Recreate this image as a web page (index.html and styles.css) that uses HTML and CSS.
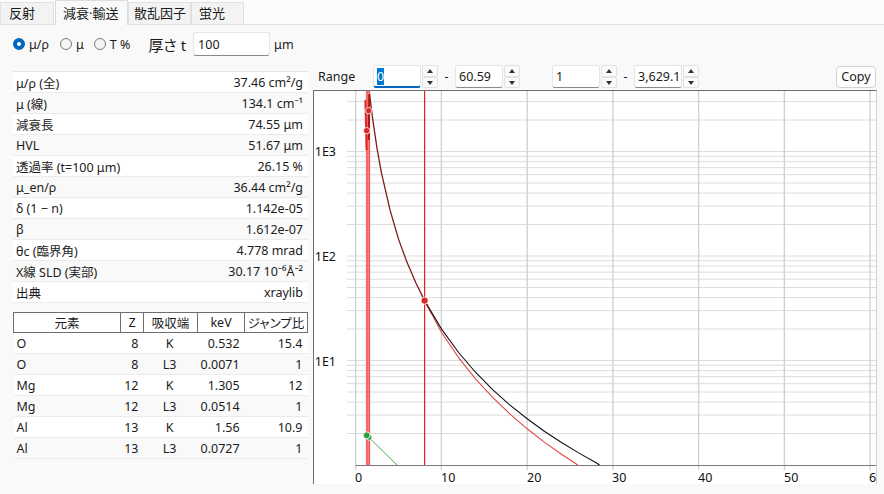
FILE: index.html
```html
<!DOCTYPE html>
<html lang="ja">
<head>
    <meta charset="UTF-8">
    <title>減衰・輸送</title>
    <link rel="stylesheet" href="styles.css">
</head>
<body>

    <!-- タブ -->
    <div class="tabs">
        <div class="tab t1">反射</div>
        <div class="tab t2 active">減衰·輸送</div>
        <div class="tab t3">散乱因子</div>
        <div class="tab t4">蛍光</div>
    </div>

    <div class="panel">
        <!-- 表示モードと厚さ -->
        <div class="options">
            <div class="radio r1"><span class="dot on"></span>μ/ρ</div>
            <div class="radio r2"><span class="dot"></span>μ</div>
            <div class="radio r3"><span class="dot"></span>T %</div>
            <div class="thick">厚さ t</div>
            <div class="field thick-input">100</div>
            <div class="unit">μm</div>
        </div>

        <div class="main">
            <div class="left">
                <table class="props">
                    <tr><td>μ/ρ (全)</td><td class="num">37.46 cm²/g</td></tr>
                    <tr><td>μ (線)</td><td class="num">134.1 cm⁻¹</td></tr>
                    <tr><td>減衰長</td><td class="num">74.55 μm</td></tr>
                    <tr><td>HVL</td><td class="num">51.67 μm</td></tr>
                    <tr><td>透過率 (t=100 μm)</td><td class="num">26.15 %</td></tr>
                    <tr><td>μ_en/ρ</td><td class="num">36.44 cm²/g</td></tr>
                    <tr><td>δ (1 − n)</td><td class="num">1.142e-05</td></tr>
                    <tr><td>β</td><td class="num">1.612e-07</td></tr>
                    <tr><td>θc (臨界角)</td><td class="num">4.778 mrad</td></tr>
                    <tr><td>X線 SLD (実部)</td><td class="num">30.17 10⁻⁶Å⁻²</td></tr>
                    <tr><td>出典</td><td class="num">xraylib</td></tr>
                </table>

                <table class="edges">
                    <tr>
                        <th class="c-el">元素</th>
                        <th class="c-z">Z</th>
                        <th class="c-edge">吸収端</th>
                        <th class="c-kev">keV</th>
                        <th class="c-jump">ジャンプ比</th>
                    </tr>
                    <tr><td>O</td><td class="num">8</td><td class="mid">K</td><td class="num">0.532</td><td class="num">15.4</td></tr>
                    <tr><td>O</td><td class="num">8</td><td class="mid">L3</td><td class="num">0.0071</td><td class="num">1</td></tr>
                    <tr><td>Mg</td><td class="num">12</td><td class="mid">K</td><td class="num">1.305</td><td class="num">12</td></tr>
                    <tr><td>Mg</td><td class="num">12</td><td class="mid">L3</td><td class="num">0.0514</td><td class="num">1</td></tr>
                    <tr><td>Al</td><td class="num">13</td><td class="mid">K</td><td class="num">1.56</td><td class="num">10.9</td></tr>
                    <tr><td>Al</td><td class="num">13</td><td class="mid">L3</td><td class="num">0.0727</td><td class="num">1</td></tr>
                </table>
            </div>

            <div class="right">
                <!-- 表示範囲 -->
                <div class="rangebar">
                    <div class="range-label">Range</div>
                    <div class="field focus w48"><span class="sel">0</span></div>
                    <div class="spin"><span class="up"></span><span class="down"></span></div>
                    <div class="dash">-</div>
                    <div class="field w48">60.59</div>
                    <div class="spin"><span class="up"></span><span class="down"></span></div>
                    <div class="field w48 gap-big">1</div>
                    <div class="spin"><span class="up"></span><span class="down"></span></div>
                    <div class="dash">-</div>
                    <div class="field w48">3,629.15</div>
                    <div class="spin"><span class="up"></span><span class="down"></span></div>
                    <button class="copy">Copy</button>
                </div>

                <div class="chart">
                    <svg width="562" height="393" viewBox="314 91 562 393">
                        <!-- 横グリッド (対数) -->
                        <g stroke="#dcdcdc" stroke-width="1">
                            <line x1="347" x2="876" y1="433.5" y2="433.5"/>
                            <line x1="347" x2="876" y1="415.1" y2="415.1"/>
                            <line x1="347" x2="876" y1="402.1" y2="402.1"/>
                            <line x1="347" x2="876" y1="392" y2="392"/>
                            <line x1="347" x2="876" y1="383.7" y2="383.7"/>
                            <line x1="347" x2="876" y1="376.7" y2="376.7"/>
                            <line x1="347" x2="876" y1="370.6" y2="370.6"/>
                            <line x1="347" x2="876" y1="365.3" y2="365.3"/>
                            <line x1="347" x2="876" y1="360.5" y2="360.5"/>
                            <line x1="347" x2="876" y1="329" y2="329"/>
                            <line x1="347" x2="876" y1="310.6" y2="310.6"/>
                            <line x1="347" x2="876" y1="297.6" y2="297.6"/>
                            <line x1="347" x2="876" y1="287.5" y2="287.5"/>
                            <line x1="347" x2="876" y1="279.2" y2="279.2"/>
                            <line x1="347" x2="876" y1="272.2" y2="272.2"/>
                            <line x1="347" x2="876" y1="266.1" y2="266.1"/>
                            <line x1="347" x2="876" y1="260.8" y2="260.8"/>
                            <line x1="347" x2="876" y1="256" y2="256"/>
                            <line x1="347" x2="876" y1="224.5" y2="224.5"/>
                            <line x1="347" x2="876" y1="206.1" y2="206.1"/>
                            <line x1="347" x2="876" y1="193.1" y2="193.1"/>
                            <line x1="347" x2="876" y1="183" y2="183"/>
                            <line x1="347" x2="876" y1="174.7" y2="174.7"/>
                            <line x1="347" x2="876" y1="167.7" y2="167.7"/>
                            <line x1="347" x2="876" y1="161.6" y2="161.6"/>
                            <line x1="347" x2="876" y1="156.3" y2="156.3"/>
                            <line x1="347" x2="876" y1="151.5" y2="151.5"/>
                            <line x1="347" x2="876" y1="120" y2="120"/>
                            <line x1="347" x2="876" y1="101.6" y2="101.6"/>
                        </g>
                        <!-- 縦グリッド -->
                        <g stroke="#d2d2d2" stroke-width="1.4">
                            <line x1="355.7" x2="355.7" y1="91" y2="470"/>
                            <line x1="441.4" x2="441.4" y1="91" y2="470"/>
                            <line x1="527.2" x2="527.2" y1="91" y2="470"/>
                            <line x1="612.9" x2="612.9" y1="91" y2="470"/>
                            <line x1="698.6" x2="698.6" y1="91" y2="470"/>
                            <line x1="784.4" x2="784.4" y1="91" y2="470"/>
                            <line x1="870.1" x2="870.1" y1="91" y2="470"/>
                        </g>
                        <line x1="355.7" x2="876" y1="465.5" y2="465.5" stroke="#7a7a7a" stroke-width="1"/>

                        <!-- 吸収端 -->
                        <rect x="365.8" y="91" width="4.4" height="374" fill="#ffa5a5"/>
                        <line x1="367" x2="367" y1="91" y2="465" stroke="#e53030" stroke-width="1"/>
                        <line x1="369.2" x2="369.2" y1="91" y2="465" stroke="#e53030" stroke-width="1"/>
                        <line x1="424.6" x2="424.6" y1="91" y2="465" stroke="#f01c1c" stroke-width="1.2"/>

                        <!-- 曲線 -->
                        <polyline fill="none" stroke="#e34a4a" stroke-width="1.1"
                            points="424.6,300.6 441.4,332.2 458.6,357.6 475.7,379.1 492.9,397.7 510,414.1 527.2,428.8 544.3,442.1 561.5,454.2 577.8,465"/>
                        <polyline fill="none" stroke="#111" stroke-width="1.1"
                            points="424.6,300.6 441.4,328.9 458.6,352.5 475.7,372.5 492.9,389.9 510,405.2 527.2,418.8 544.3,431.2 561.5,442.5 578.6,452.9 595.7,462.5 599.5,465"/>
                        <polyline fill="none" stroke="#7c1d1d" stroke-width="1.3"
                            points="369.6,95 371.1,106.3 372.8,119.9 377.1,148.9 381.4,172.6 390,209.9 398.6,239.4 407.1,262.6 415.7,282.6 424.6,300.6 432,314"/>
                        <path d="M365.4 100 L366.6 150" stroke="#e02828" stroke-width="2" fill="none"/>
                        <path d="M369.3 94 L368.7 140" stroke="#b01818" stroke-width="2" fill="none"/>
                        <polyline fill="none" stroke="#4caf50" stroke-width="1"
                            points="366.7,435.3 369,437.6 397,465"/>

                        <!-- マーカー -->
                        <circle cx="368.7" cy="110.7" r="3.2" fill="#d62828" stroke="#fff" stroke-width="0.8"/>
                        <circle cx="366.7" cy="130.7" r="3.2" fill="#d62828" stroke="#fff" stroke-width="0.8"/>
                        <circle cx="424.6" cy="300.6" r="3.6" fill="#d62828" stroke="#fff" stroke-width="0.8"/>
                        <circle cx="369.2" cy="437.6" r="2.8" fill="#2e9e3e" stroke="#fff" stroke-width="0.8"/>
                        <circle cx="366.7" cy="435.3" r="3.4" fill="#2e9e3e" stroke="#fff" stroke-width="0.8"/>

                        <!-- 軸ラベル -->
                        <g class="axis-text" font-size="12.5" fill="#111">
                            <text x="336" y="156" text-anchor="end">1E3</text>
                            <text x="336" y="261" text-anchor="end">1E2</text>
                            <text x="336" y="365.5" text-anchor="end">1E1</text>
                            <text x="355" y="482">0</text>
                            <text x="441" y="482">10</text>
                            <text x="527" y="482">20</text>
                            <text x="612" y="482">30</text>
                            <text x="698" y="482">40</text>
                            <text x="784" y="482">50</text>
                            <text x="869" y="482">6</text>
                        </g>
                    </svg>
                </div>
            </div>
        </div>
    </div>

</body>
</html>
```

FILE: styles.css
```css
html, body {
    margin: 0;
    width: 884px;
    height: 494px;
    overflow: hidden;
}

body {
    background-color: #f9f9f9;
    font-family: "Noto Sans", "Noto Sans CJK JP", sans-serif;
    font-size: 12.5px;
    color: #1b1b1b;
}

/* タブ */
.tabs {
    display: flex;
    align-items: flex-end;
    height: 24px;
    background-color: #fcfcfc;
    border-bottom: 1px solid #e3e3e3;
}

.tab {
    box-sizing: border-box;
    height: 22px;
    padding-left: 8px;
    line-height: 21px;
    font-size: 13px;
    background-color: #f3f3f3;
    border: 1px solid #e0e0e0;
    border-bottom: none;
    color: #1b1b1b;
}

.tab.active {
    height: 25px;
    margin-bottom: -1px;
    line-height: 24px;
    background-color: #f9f9f9;
    border-color: #dcdcdc;
}

.t1 { width: 54px; margin-right: 1px; }
.t2 { width: 73px; padding-left: 7px; }
.t3 { width: 63px; padding-left: 5px; }
.t4 { width: 53px; padding-left: 7px; }

.panel {
    padding-top: 7px;
}

/* 表示モード */
.options {
    display: flex;
    align-items: center;
    height: 24px;
    padding-left: 13px;
}

.radio {
    display: flex;
    align-items: center;
}

.r1 { margin-right: 11px; }
.r2 { margin-right: 10px; }
.r3 { margin-right: 18px; }

.dot {
    box-sizing: border-box;
    width: 12px;
    height: 12px;
    margin-right: 4px;
    border: 1px solid #7a7a7a;
    border-radius: 50%;
    background-color: #f5f5f5;
}

.dot.on {
    border: 4px solid #0067c0;
    background-color: #fff;
}

.thick {
    font-size: 15px;
    margin-right: 7px;
    font-feature-settings: "palt";
}

.field {
    box-sizing: border-box;
    height: 23px;
    padding: 0 3px;
    display: flex;
    align-items: center;
    background-color: #fff;
    border: 1px solid #e5e5e5;
    border-bottom-color: #8a8a8a;
    border-radius: 3px;
    overflow: hidden;
    white-space: nowrap;
}

.thick-input {
    width: 77px;
    height: 24px;
    padding-left: 4px;
}

.unit {
    margin-left: 4px;
}

.main {
    display: flex;
    align-items: flex-start;
    margin-top: 9px;
}

/* 左側の表 */
.left {
    width: 295px;
    margin-left: 13px;
    padding-top: 6px;
}

table {
    width: 100%;
    border-collapse: collapse;
}

.props {
    border-top: 1px solid #e6e6e6;
}

.props td,
.edges td {
    height: 20px;
    padding: 0 5px 0 3px;
    border-bottom: 1px solid #ebebeb;
    white-space: nowrap;
}

.props tr:nth-child(odd) td {
    background-color: #fff;
}

.num {
    text-align: right;
}

.mid {
    text-align: center;
}

.edges {
    margin-top: 9px;
}

.edges tr:nth-child(even) td {
    background-color: #fff;
}

.edges tr:nth-child(odd) td {
    background-color: #f9f9f9;
}

.edges th {
    height: 19px;
    padding: 0;
    font-weight: normal;
    background-color: #fff;
    border: 1px solid #6e6e6e;
    white-space: nowrap;
}

.c-el { width: 106px; }
.c-z { width: 22px; }
.c-edge { width: 53px; }
.c-kev { width: 46px; }

.c-jump {
    font-feature-settings: "palt";
}

/* 右側 */
.right {
    width: 564px;
    margin-left: 5px;
}

.rangebar {
    display: flex;
    align-items: center;
    height: 23px;
}

.range-label {
    width: 55px;
    margin-left: 5px;
}

.w48 {
    width: 48px;
}

.gap-big {
    margin-left: 32px;
}

.focus {
    border-bottom: 2px solid #0067c0;
    padding-top: 1px;
}

.sel {
    background-color: #0078d4;
    color: #fff;
}

.spin {
    display: flex;
    flex-direction: column;
    width: 16px;
    height: 23px;
    margin-left: 1px;
}

.spin span {
    box-sizing: border-box;
    flex: 1;
    position: relative;
    background-color: #fbfbfb;
    border: 1px solid #e2e2e2;
    border-radius: 2px;
}

.spin .up::after,
.spin .down::after {
    content: "";
    position: absolute;
    left: 4px;
    top: 3px;
    border-left: 3px solid transparent;
    border-right: 3px solid transparent;
}

.spin .up::after {
    border-bottom: 4px solid #333;
}

.spin .down::after {
    border-top: 4px solid #333;
}

.dash {
    width: 17px;
    text-align: center;
}

.copy {
    margin-left: auto;
    margin-right: 1px;
    width: 40px;
    height: 22px;
    padding: 0;
    font-family: inherit;
    font-size: 12.5px;
    color: #1b1b1b;
    background-color: #fdfdfd;
    border: 1px solid #d2d2d2;
    border-radius: 4px;
}

.chart {
    margin-top: 2px;
    height: 393px;
    background-color: #fff;
    border-top: 1px solid #6f6f6f;
    border-left: 1px solid #6f6f6f;
    border-right: 1px solid #d0d0d0;
}

.chart svg {
    display: block;
    overflow: visible;
}

.axis-text {
    font-family: "Noto Sans", sans-serif;
}
```
